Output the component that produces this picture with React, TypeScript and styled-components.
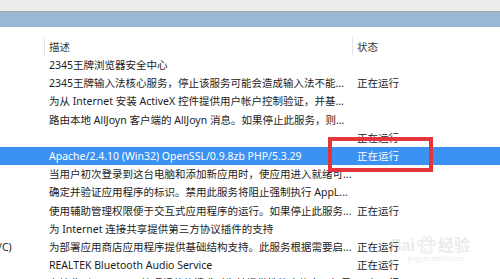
import React from "react";
import styled, { createGlobalStyle } from "styled-components";

const GlobalStyle = createGlobalStyle`
  html, body {
    margin: 0;
    padding: 0;
    background: #ffffff;
  }
  body {
    font-family: "Noto Sans", "Noto Sans CJK SC", sans-serif;
  }
`;

const Window = styled.div`
  position: relative;
  width: 500px;
  height: 279px;
  overflow: hidden;
  background: #ffffff;
  display: flex;
  flex-direction: column;
  & > * {
    flex-shrink: 0;
  }
`;

const TopStrip = styled.div`
  height: 11px;
  background: #ececec;
  border-bottom: 1px solid #a9a9a9;
`;

const BlueBar = styled.div`
  height: 15px;
  background: #9ab7d5;
`;

const Spacer = styled.div`
  height: 10px;
`;

const Table = styled.div`
  display: flex;
  flex-direction: column;
`;

const Row = styled.div<{ $selected?: boolean; $header?: boolean }>`
  display: grid;
  grid-template-columns: 44px 308px minmax(0, 1fr);
  height: ${(p) => (p.$header ? "19px" : "18.2px")};
  flex-shrink: 0;
  align-items: center;
  font-size: 10.5px;
  line-height: 18px;
  white-space: nowrap;
  color: ${(p) => (p.$selected ? "#ffffff" : p.$header ? "#3a3a3a" : "#1c1c1c")};
  background: ${(p) => (p.$selected ? "#3b92f2" : "transparent")};
`;

const Cell = styled.div<{ $divider?: boolean }>`
  min-width: 0;
  overflow: hidden;
  height: 100%;
  display: flex;
  align-items: center;
  padding-left: ${(p) => (p.$divider ? "4px" : "5px")};
  border-left: ${(p) => (p.$divider ? "1px solid #e4e4e4" : "none")};
`;

const NameCell = styled.div`
  min-width: 0;
  overflow: hidden;
  height: 100%;
  display: flex;
  align-items: center;
  text-indent: -2px;
`;

const Highlight = styled.div`
  position: absolute;
  left: 328px;
  top: 137px;
  width: 97px;
  height: 27px;
  border: 4px solid #e3353b;
`;

const Watermark = styled.div`
  position: absolute;
  left: 390px;
  top: 236px;
  display: flex;
  flex-direction: column;
  align-items: flex-start;
  white-space: nowrap;
  opacity: 0.15;
  color: #7a7a7a;
  pointer-events: none;
`;

const MarkTop = styled.div`
  display: flex;
  align-items: center;
  gap: 1px;
  font-family: "Liberation Sans", "Noto Sans CJK SC", sans-serif;
  font-size: 16px;
  font-weight: bold;
  line-height: 18px;
`;

const MarkUrl = styled.div`
  font-family: "Liberation Sans", sans-serif;
  font-size: 7px;
  line-height: 8px;
  margin-left: 18px;
`;

type Item = { name?: string; desc: string; status?: string; selected?: boolean };

const items: Item[] = [
  { desc: "2345王牌浏览器安全中心" },
  { desc: "2345王牌输入法核心服务，停止该服务可能会造成输入法不能...", status: "正在运行" },
  { desc: "为从 Internet 安装 ActiveX 控件提供用户帐户控制验证，并基..." },
  { desc: "路由本地 AllJoyn 客户端的 AllJoyn 消息。如果停止此服务，则..." },
  { desc: "", status: "正在运行" },
  { desc: "Apache/2.4.10 (Win32) OpenSSL/0.9.8zb PHP/5.3.29", status: "正在运行", selected: true },
  { desc: "当用户初次登录到这台电脑和添加新应用时，使应用进入就绪可..." },
  { desc: "确定并验证应用程序的标识。禁用此服务将阻止强制执行 AppL..." },
  { desc: "使用辅助管理权限便于交互式应用程序的运行。如果停止此服务...", status: "正在运行" },
  { desc: "为 Internet 连接共享提供第三方协议插件的支持" },
  { name: "/C)", desc: "为部署应用商店应用程序提供基础结构支持。此服务根据需要启...", status: "正在运行" },
  { desc: "REALTEK Bluetooth Audio Service", status: "正在运行" },
  { desc: "在接收到 Windows 管理规范的请求时为其提供性能库信息。如果...", status: "正在运行" },
];

const Paw = () => (
  <svg width="21" height="19" viewBox="0 0 24 22">
    <g fill="none" stroke="#7a7a7a" strokeWidth="1.6">
      <ellipse cx="4.5" cy="8" rx="2.4" ry="3" />
      <ellipse cx="9" cy="3.8" rx="2.2" ry="2.8" />
      <ellipse cx="15" cy="3.8" rx="2.2" ry="2.8" />
      <ellipse cx="19.5" cy="8" rx="2.4" ry="3" />
      <path d="M12 10 C7.5 10 5 15.5 6 18.5 C7 21 10 19.8 12 19.8 C14 19.8 17 21 18 18.5 C19 15.5 16.5 10 12 10 Z" />
    </g>
    <text x="12" y="18.5" textAnchor="middle" fontSize="7" fontFamily="Liberation Sans, sans-serif" fontWeight="bold" fill="#7a7a7a">du</text>
  </svg>
);

export default function App() {
  return (
    <>
      <GlobalStyle />
      <Window>
        <TopStrip />
        <BlueBar />
        <Spacer />
        <Table>
          <Row $header>
            <NameCell />
            <Cell $divider>描述</Cell>
            <Cell $divider>状态</Cell>
          </Row>
          {items.map((it, i) => (
            <Row key={i} $selected={it.selected}>
              <NameCell>{it.name ?? ""}</NameCell>
              <Cell>{it.desc}</Cell>
              <Cell>{it.status ?? ""}</Cell>
            </Row>
          ))}
        </Table>
        <Highlight />
        <Watermark>
          <MarkTop>
            <span>Bai</span>
            <Paw />
            <span>经验</span>
          </MarkTop>
          <MarkUrl>jingyan.baidu.com</MarkUrl>
        </Watermark>
      </Window>
    </>
  );
}
